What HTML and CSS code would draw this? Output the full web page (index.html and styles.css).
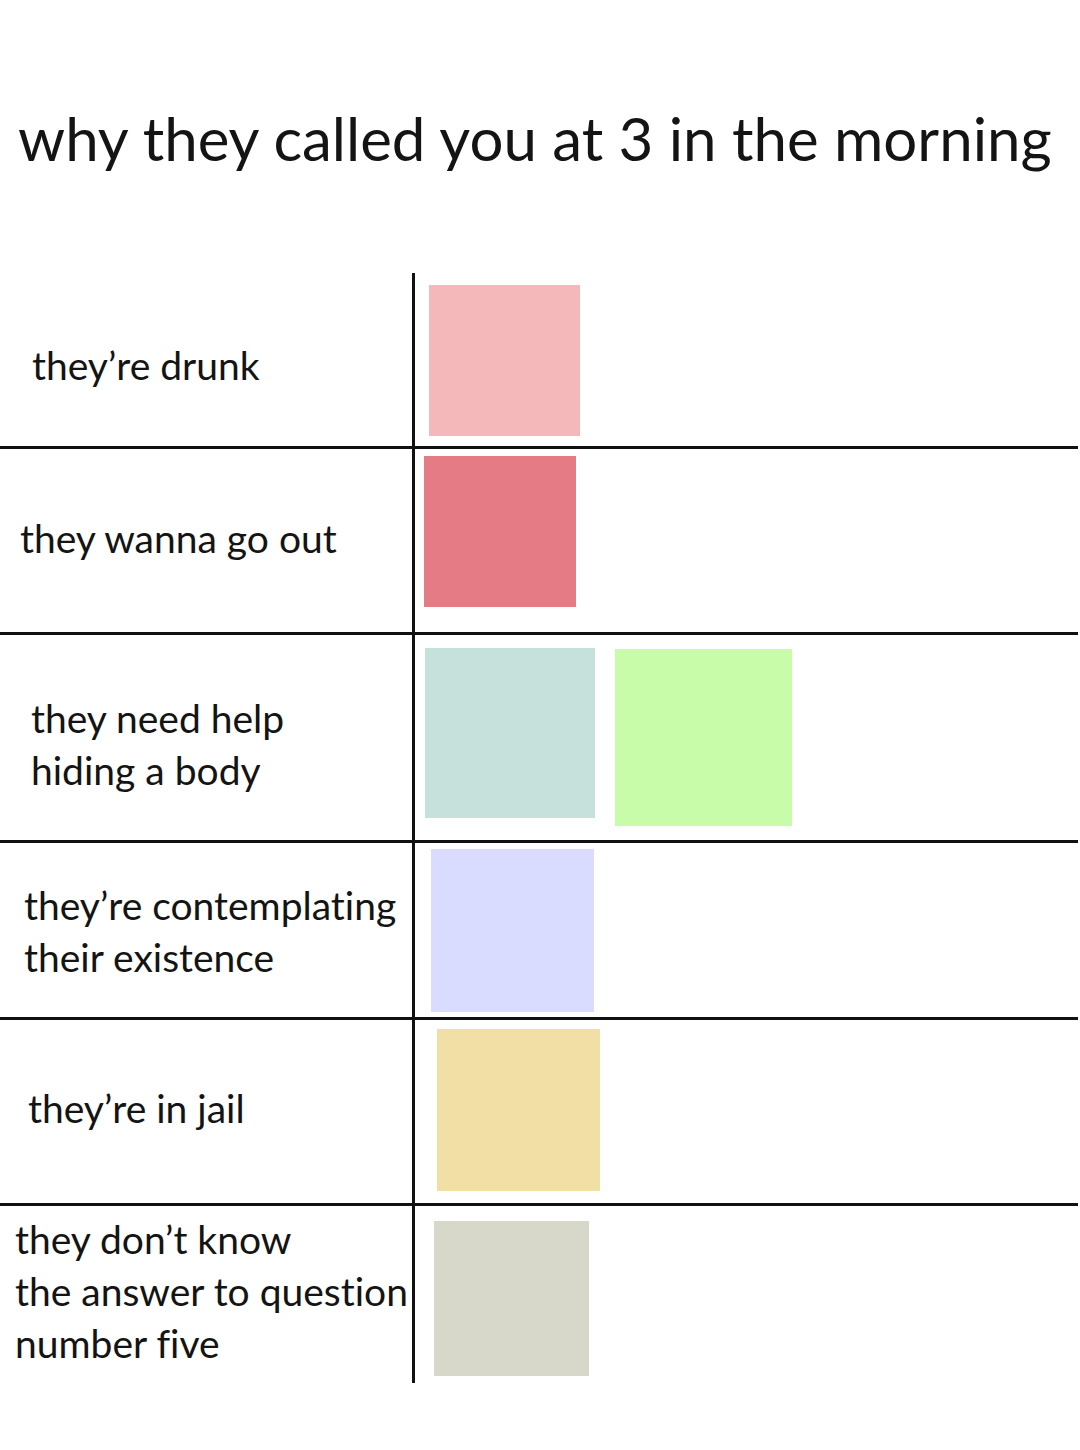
FILE: index.html
```html
<!DOCTYPE html>
<html lang="en">
<head>
<meta charset="utf-8">
<title>why they called you at 3 in the morning</title>
<link rel="stylesheet" href="styles.css">
</head>
<body>
<main class="page">
  <h1 class="title">why they called you at 3 in the morning</h1>
  <div class="chart">
    <div class="row row-1">
      <div class="label label-1">they’re drunk</div>
      <div class="cells"><div class="sq sq-pink"></div></div>
    </div>
    <div class="row row-2">
      <div class="label label-2">they wanna go out</div>
      <div class="cells"><div class="sq sq-red"></div></div>
    </div>
    <div class="row row-3">
      <div class="label label-3">they need help<br>hiding a body</div>
      <div class="cells"><div class="sq sq-teal"></div><div class="sq sq-green"></div></div>
    </div>
    <div class="row row-4">
      <div class="label label-4">they’re contemplating<br>their existence</div>
      <div class="cells"><div class="sq sq-lavender"></div></div>
    </div>
    <div class="row row-5">
      <div class="label label-5">they’re in jail</div>
      <div class="cells"><div class="sq sq-yellow"></div></div>
    </div>
    <div class="row row-6">
      <div class="label label-6">they don’t know<br>the answer to question<br>number five</div>
      <div class="cells"><div class="sq sq-gray"></div></div>
    </div>
  </div>
</main>
</body>
</html>
```
FILE: styles.css
```css
*, *::before, *::after {
  box-sizing: border-box;
}

html, body {
  margin: 0;
  padding: 0;
  background: #ffffff;
}

.page {
  width: 1080px;
  height: 1450px;
  font-family: Lato, "Noto Sans", "Liberation Sans", sans-serif;
  font-variant-ligatures: none;
  color: #141414;
}

.title {
  margin: 0 0 98px 0;
  height: 175px;
  padding: 101px 0 0 18px;
  font-size: 60px;
  line-height: 74px;
  font-weight: 400;
  white-space: nowrap;
}

.chart {
  width: 1078px;
}

.row {
  display: flex;
  border-bottom: 3px solid #111;
}

.row-1 { height: 176px; }
.row-2 { height: 186px; }
.row-3 { height: 208px; }
.row-4 { height: 177px; }
.row-5 { height: 186px; }
.row-6 { height: 177px; border-bottom: none; }

.label {
  width: 415px;
  flex: none;
  border-right: 3px solid #111;
  font-size: 39px;
  line-height: 52px;
  white-space: nowrap;
}

.label-1 { padding: 66px 0 0 32px; }
.label-2 { padding: 63px 0 0 20px; }
.label-3 { padding: 57px 0 0 31px; }
.label-4 { padding: 36px 0 0 24px; }
.label-5 { padding: 62px 0 0 28px; }
.label-6 { padding: 7px 0 0 15px; }

.cells {
  display: flex;
  align-items: flex-start;
  gap: 20px;
}

.sq { flex: none; }

.sq-pink     { width: 151px; height: 151px; margin: 12px 0 0 14px; background: #f4b8bb; }
.sq-red      { width: 152px; height: 151px; margin: 7px 0 0 9px; background: #e57b85; }
.sq-teal     { width: 170px; height: 170px; margin: 13px 0 0 10px; background: #c6e1dc; }
.sq-green    { width: 177px; height: 177px; margin-top: 14px; background: #c8fca8; }
.sq-lavender { width: 163px; height: 163px; margin: 6px 0 0 16px; background: #d9dcfe; }
.sq-yellow   { width: 163px; height: 162px; margin: 9px 0 0 22px; background: #f1dfa5; }
.sq-gray     { width: 155px; height: 155px; margin: 15px 0 0 19px; background: #d7d7ca; }
```
